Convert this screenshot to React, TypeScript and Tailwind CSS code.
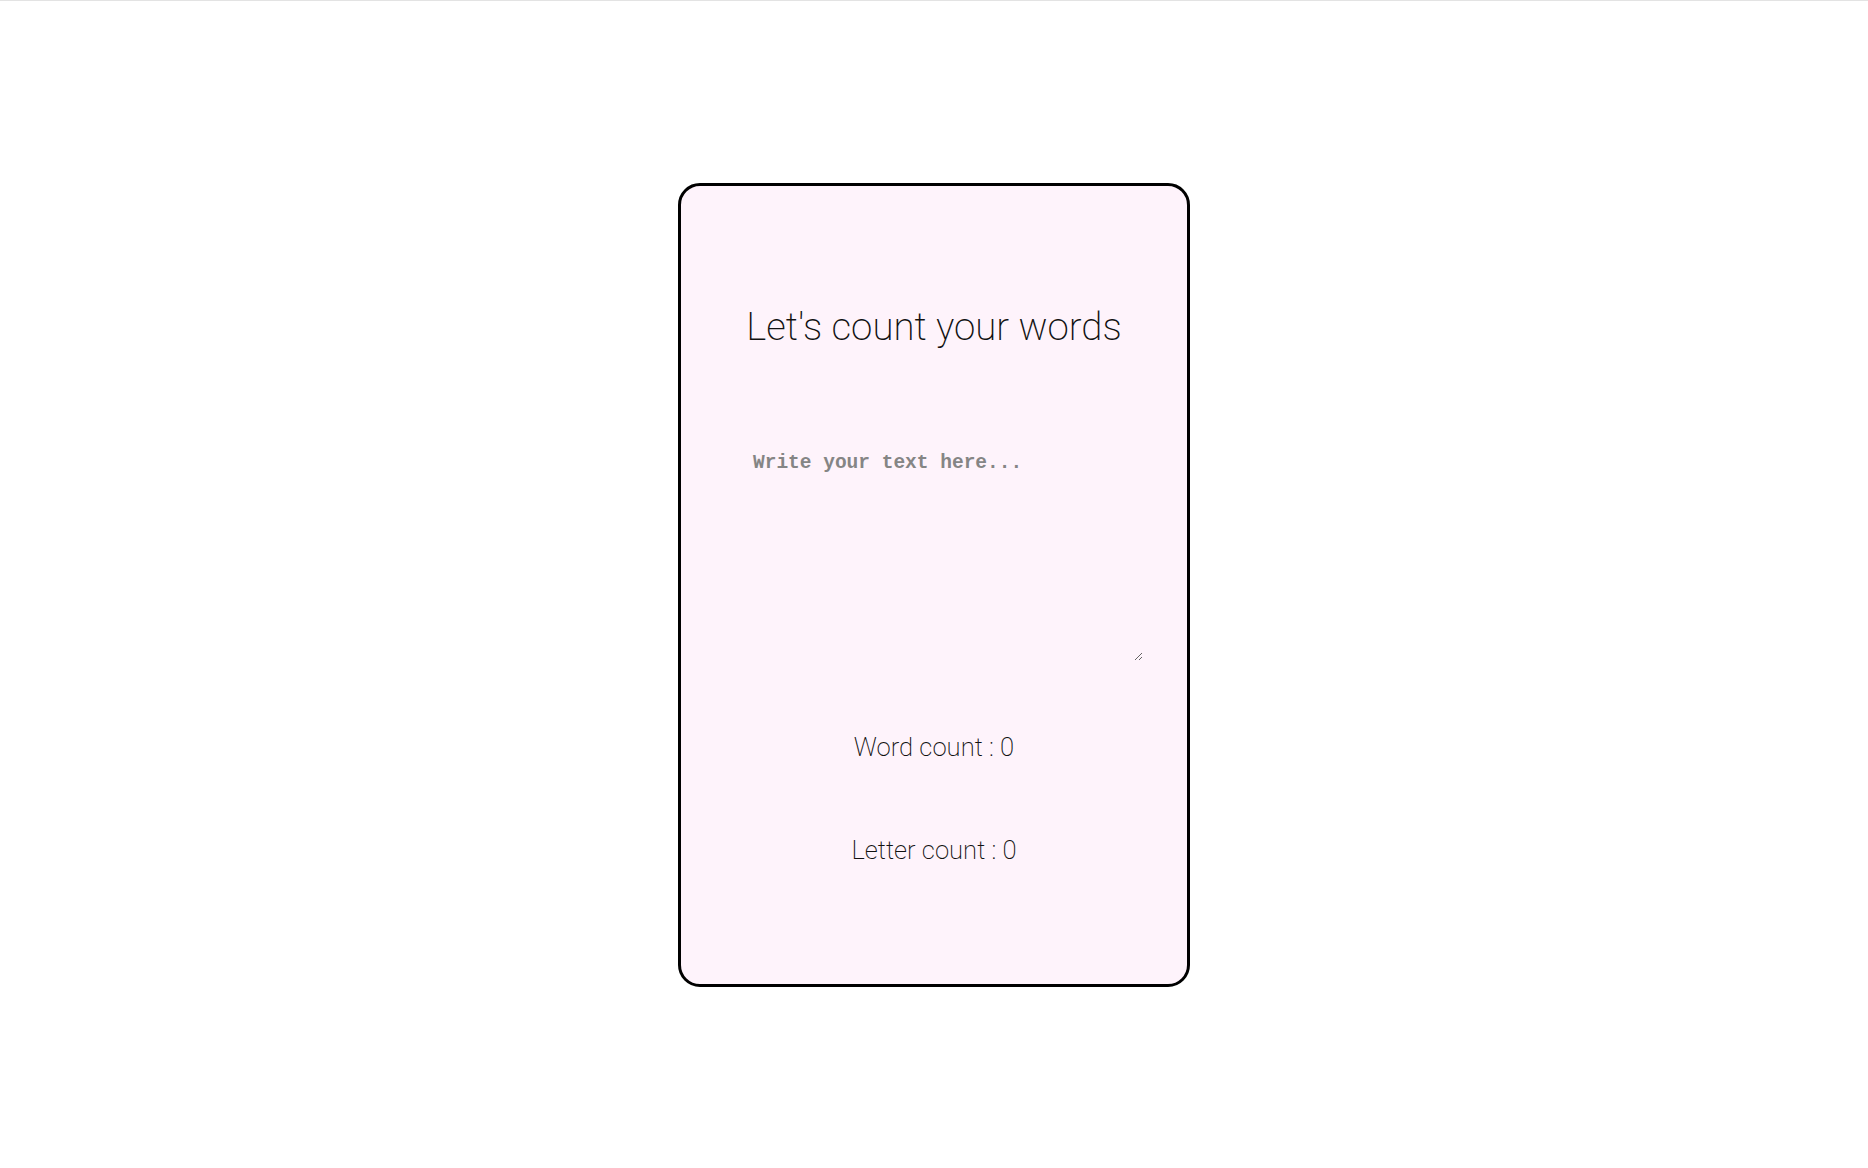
import React, { useState } from "react";

export default function App() {
  const [text, setText] = useState("");
  const words = text.trim() === "" ? 0 : text.trim().split(/\s+/).length;
  const letters = text.replace(/\s/g, "").length;
  return (
    <div className="h-screen w-full bg-white border-t border-[#e3e3e3] flex items-center justify-center">
      <div
        className="w-[512px] h-[804px] rounded-[22px] border-[3px] border-black bg-[#fef3fb] flex flex-col items-center"
        style={{ fontFamily: "Roboto, 'Liberation Sans', sans-serif" }}
      >
        <h1 className="mt-[117px] text-[38.4px] leading-[48px] font-extralight text-[#111]">
          Let's count your words
        </h1>
        <textarea
          value={text}
          onChange={(e) => setText(e.target.value)}
          placeholder="Write your text here..."
          className="mt-[88px] ml-[18px] w-[400px] h-[222px] p-[10px] bg-transparent border-0 outline-none text-[19.5px] font-bold text-[#333] placeholder:text-[#858585] resize"
          style={{ fontFamily: "'Liberation Mono', 'Courier New', monospace" }}
        />
        <p className="mt-[70px] text-[25.6px] leading-[32px] font-extralight text-[#111]">
          Word count : {words}
        </p>
        <p className="mt-[71px] text-[25.6px] leading-[32px] font-extralight text-[#111]">
          Letter count : {letters}
        </p>
      </div>
    </div>
  );
}
